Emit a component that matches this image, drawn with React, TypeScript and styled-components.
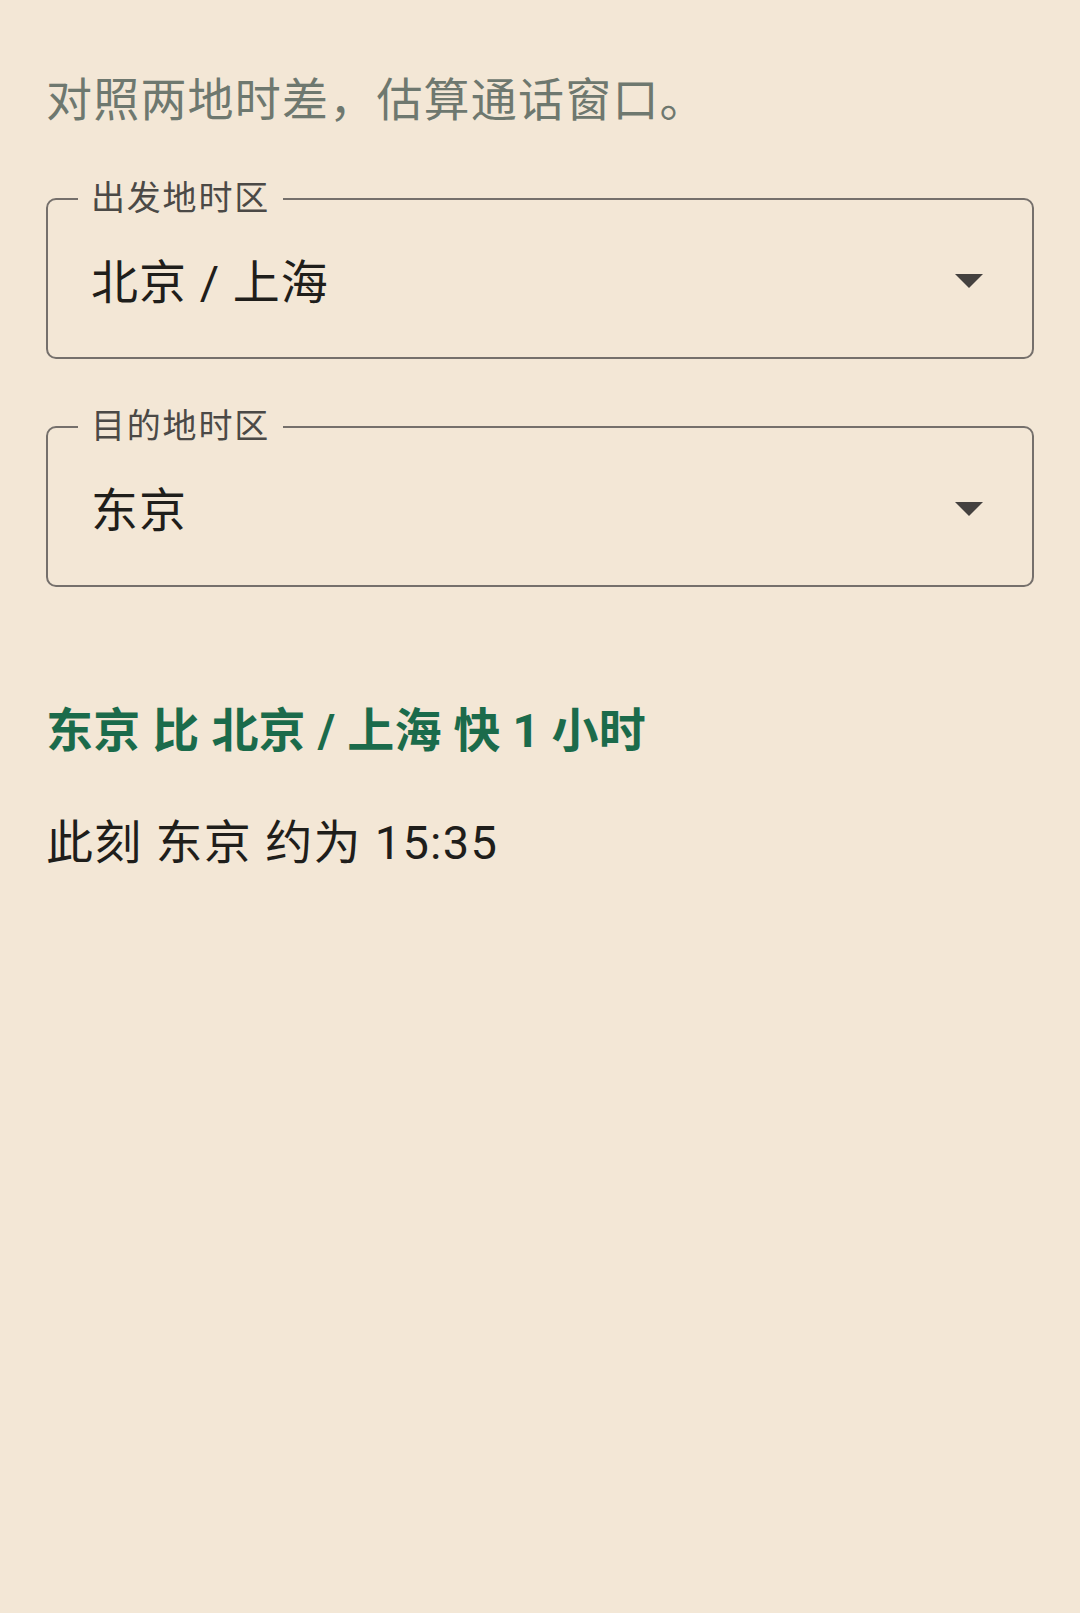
import React from 'react';
import styled, { createGlobalStyle } from 'styled-components';

const GlobalStyle = createGlobalStyle`
  html, body {
    margin: 0;
    padding: 0;
    background: #f3e7d6;
  }
  body {
    font-family: Roboto, "Noto Sans CJK SC", sans-serif;
  }
`;

const Page = styled.main`
  min-height: 1613px;
  box-sizing: border-box;
  padding: 70px 46px 0;
  background: #f3e7d6;
`;

const Subtitle = styled.p`
  margin: 0 0 68px;
  font-size: 46px;
  line-height: 60px;
  letter-spacing: 1.2px;
  color: #6e786f;
`;

const Field = styled.div`
  position: relative;
  height: 161px;
  box-sizing: border-box;
  border: 2px solid #75706c;
  border-radius: 10px;
  display: flex;
  align-items: center;
  padding: 8px 49px 0 43px;
  & + & {
    margin-top: 67px;
  }
`;

const FieldLabel = styled.span`
  position: absolute;
  top: -22px;
  left: 30px;
  padding: 0 13px;
  background: #f3e7d6;
  font-size: 34px;
  line-height: 40px;
  letter-spacing: 1.8px;
  color: #4b4946;
`;

const Value = styled.span`
  flex: 1;
  font-size: 47px;
  line-height: 60px;
  letter-spacing: 1px;
  color: #1f1e1b;
`;

const Caret = styled.span`
  width: 0;
  height: 0;
  margin-top: -4px;
  border-left: 14px solid transparent;
  border-right: 14px solid transparent;
  border-top: 14px solid #44413f;
`;

const Difference = styled.p`
  margin: 114px 0 0;
  font-size: 47px;
  line-height: 60px;
  font-weight: 700;
  letter-spacing: 0.2px;
  color: #1b6b4b;
`;

const Now = styled.p`
  margin: 52px 0 0;
  font-size: 47px;
  line-height: 60px;
  letter-spacing: 1.3px;
  color: #1f1e1b;
`;

interface SelectProps {
  label: string;
  value: string;
}

function ZoneSelect({ label, value }: SelectProps) {
  return (
    <Field>
      <FieldLabel>{label}</FieldLabel>
      <Value>{value}</Value>
      <Caret />
    </Field>
  );
}

export default function App() {
  const from = '北京 / 上海';
  const to = '东京';
  return (
    <>
      <GlobalStyle />
      <Page>
        <Subtitle>对照两地时差，估算通话窗口。</Subtitle>
        <ZoneSelect label="出发地时区" value={from} />
        <ZoneSelect label="目的地时区" value={to} />
        <Difference>
          {to} 比 {from} 快 1 小时
        </Difference>
        <Now>此刻 {to} 约为 15:35</Now>
      </Page>
    </>
  );
}
